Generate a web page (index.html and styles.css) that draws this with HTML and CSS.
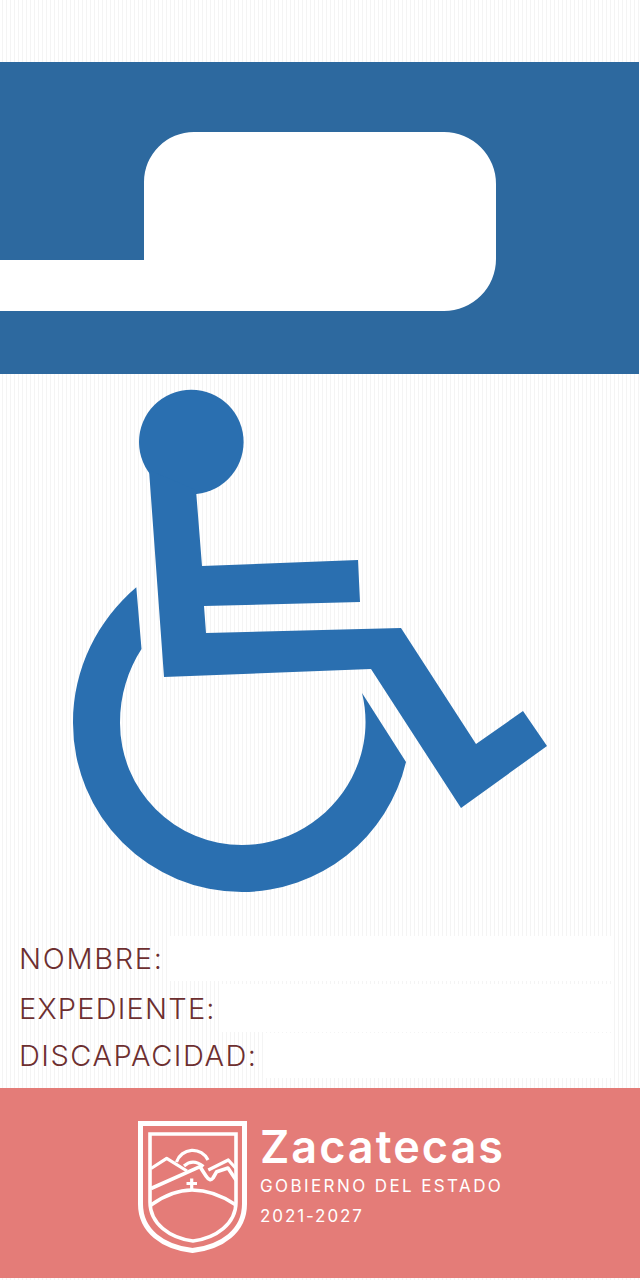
FILE: index.html
```html
<!DOCTYPE html>
<html lang="es">
<head>
<meta charset="utf-8">
<title>Tarjetón de discapacidad</title>
<link rel="stylesheet" href="styles.css">
</head>
<body>
<main class="card">
  <div class="top-gap"></div>
  <svg class="band" viewBox="0 62 640 312" width="640" height="312" aria-hidden="true">
    <rect x="0" y="62" width="639" height="312" fill="#2d699f"/>
    <path fill="#ffffff" d="M0 260H144V182A50 50 0 0 1 194 132H444A52 52 0 0 1 496 184V259A52 52 0 0 1 444 311H0Z"/>
  </svg>
  <svg class="symbol" viewBox="0 374 640 562" width="640" height="562" aria-hidden="true">
    <circle cx="191.3" cy="442" r="52.3" fill="#2a6fb0"/>
    <path fill="#2a6fb0" d="M149 470L164 677L371 669L461 808L547 746L523 711L476 744L401 628L206 633L204 606L360 602L358 560L202 566L196 490Z"/>
    <path fill="#2a6fb0" d="M136.300 587.300C98 620 73 668 73 723A169 169 0 0 0 242 892A169 169 0 0 0 406 762L362 693C381 770 321 845 242 845A122 122 0 0 1 120 723C120 695 128 670 141.500 649Z"/>
  </svg>
  <section class="fields">
    <div class="field field-name"><span class="label">NOMBRE:</span><span class="blank"></span></div>
    <div class="field field-file"><span class="label">EXPEDIENTE:</span><span class="blank"></span></div>
    <div class="field field-dis"><span class="label">DISCAPACIDAD:</span><span class="blank"></span></div>
  </section>
  <footer class="footer">
    <svg class="shield" viewBox="136 1119 114 136" width="114" height="136" aria-hidden="true">
      <g fill="none" stroke="#ffffff" stroke-linejoin="round" stroke-linecap="butt">
        <path stroke-width="5" stroke-linejoin="miter" d="M140.500 1123.500H244.500V1204C244.500 1231 222 1247 192.500 1250.500C163 1247 140.500 1231 140.500 1204Z"/>
        <path stroke-width="3.600" stroke-linejoin="miter" d="M150 1134H236V1202C236 1224 216 1238 193 1241C170 1238 150 1224 150 1202Z"/>
        <path stroke-width="3.200" d="M151 1168.500L166.700 1158.300L187 1171"/>
        <path stroke-width="3.200" d="M176.500 1162A17 17 0 0 1 208 1160"/>
        <path stroke-width="3.200" d="M184 1166Q193 1158 203.500 1166.500"/>
        <path stroke-width="3.600" d="M151 1188.500L200 1166.700L206 1176Q210 1182 213 1178L216.700 1171.700L228 1168L236 1180"/>
        <path stroke-width="3.200" d="M208.300 1170L228.300 1160L236 1168.500"/>
        <path stroke-width="3.600" d="M151 1205Q172 1190 192 1190Q214 1190 236 1205"/>
        <path stroke-width="3.200" d="M191.700 1178.500V1190M186.500 1183.500H197"/>
      </g>
    </svg>
    <div class="brand">
      <div class="brand-name">Zacatecas</div>
      <div class="brand-sub">GOBIERNO DEL ESTADO</div>
      <div class="brand-years">2021-2027</div>
    </div>
  </footer>
</main>
</body>
</html>
```
FILE: styles.css
```css
* { box-sizing: border-box; }
html, body { margin: 0; padding: 0; }
body { width: 640px; height: 1280px; overflow: hidden; background: #fff; }
.card {
  width: 640px;
  height: 1280px;
  display: flex;
  flex-direction: column;
  font-family: Inter, "Open Sans", sans-serif;
  background: repeating-linear-gradient(90deg, #ffffff 0 2px, #f4f4f4 2px 3px, #ffffff 3px 4px);
}
.top-gap { height: 62px; flex: none; }
.band, .symbol, .shield { display: block; flex: none; }
.fields {
  flex: none;
  height: 152px;
  display: flex;
  flex-direction: column;
  padding-left: 19px;
  padding-right: 27px;
}
.field { flex: none; display: flex; align-items: stretch; }
.field-name { height: 50px; }
.field-file { height: 47px; }
.field-dis { height: 49px; }
.label {
  color: #6d2f30;
  font-size: 29px;
  font-weight: 350;
  line-height: 46px;
  white-space: nowrap;
}
.field-name .label { letter-spacing: 1.700px; }
.field-file .label { letter-spacing: 1.200px; }
.field-dis .label { letter-spacing: 1.500px; }
.blank { flex: 1; background: #fff; margin-left: 6px; }
.field-name .blank { margin-bottom: 5px; }
.field-file .blank { margin-top: -2px; margin-bottom: 1px; }
.field-dis .blank { margin-bottom: 4px; }
.footer {
  flex: none;
  height: 190px;
  background: #e47c78;
  display: flex;
  align-items: flex-start;
  padding: 31px 0 0 136px;
  gap: 10px;
  color: #fff;
}
.brand { display: flex; flex-direction: column; padding-top: 3px; }
.brand-name { font-size: 45px; font-weight: 600; line-height: 50px; letter-spacing: 2px; }
.brand-sub { font-size: 17px; font-weight: 400; line-height: 20px; letter-spacing: 2.400px; margin-top: 4px; white-space: nowrap; }
.brand-years { font-size: 17px; font-weight: 400; line-height: 20px; letter-spacing: 1.900px; margin-top: 10px; }
```
